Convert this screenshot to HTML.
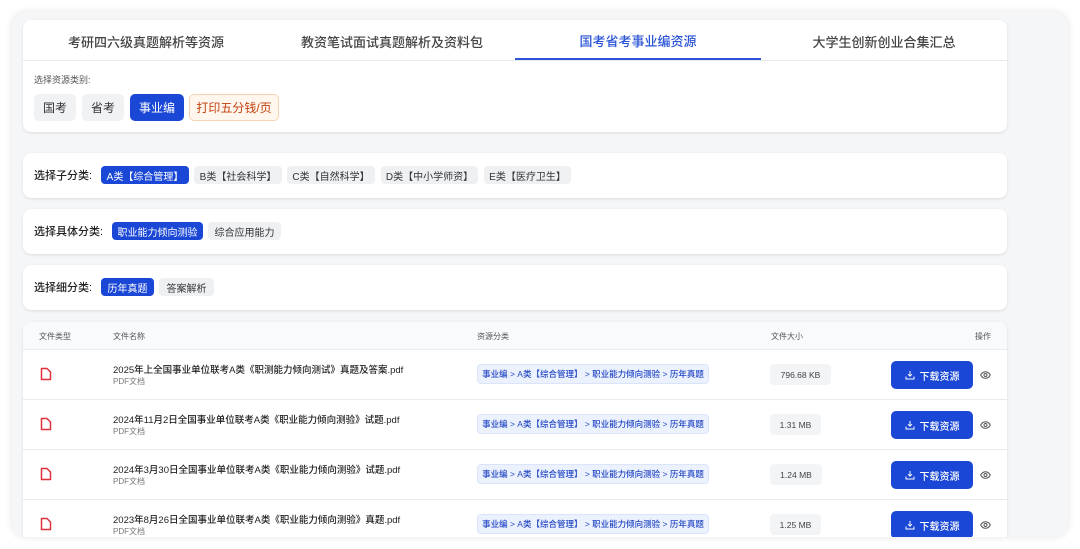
<!DOCTYPE html>
<html><head><meta charset="utf-8"><style>
*{box-sizing:border-box;margin:0;padding:0}
body{width:1080px;height:549px;overflow:hidden;background:#fff;font-family:"Liberation Sans","Noto Sans CJK SC",sans-serif;color:#333;position:relative}
.outer{position:absolute;left:12px;top:12px;width:1056px;height:525px;background:#f5f6f8;border-radius:14px;box-shadow:0 0 8px rgba(0,0,0,.1);overflow:hidden}
.card{position:absolute;left:11px;width:984px;background:#fff;border-radius:8px;box-shadow:0 1px 3px rgba(0,0,0,.1)}
.tabs{height:41px;border-bottom:1px solid #e8eaee;display:flex;position:relative}
.tab{flex:1;display:flex;align-items:center;justify-content:center;padding-top:2px;font-size:13px;color:#444;font-weight:500}
.tab.on{color:#2b54d6;border-bottom:2px solid #2b54d6}
.btn,.pill,.dl,.sz,.cat{display:flex;align-items:center;justify-content:center}
.btn{position:absolute;height:27px;border-radius:5px;font-size:12px;background:#f1f2f4;color:#333}
.pill{position:absolute;height:18px;border-radius:4px;font-size:10px;background:#eff0f2;color:#333;top:13px}
.pill.on{background:#1a47d6;color:#fff}
.lbl{position:absolute;left:11px;font-size:11px;color:#222;font-weight:500}
.th{position:absolute;top:9px;font-size:8px;color:#555}
.row{position:absolute;left:0;width:984px;height:50px;border-top:1px solid #e8eaee}
.nm{position:absolute;left:90px;top:12px;font-size:9.5px;color:#222;font-weight:500}
.sub{position:absolute;left:90px;top:26px;font-size:8px;color:#777}
.cat{position:absolute;left:454px;top:14px;width:232px;height:20px;background:#ebf1fd;border:1px solid #dbe4fa;border-radius:4px;font-size:8.5px;color:#2347c4;font-weight:500}
.sz{position:absolute;top:14px;height:21px;background:#f3f4f6;border-radius:4px;font-size:8.5px;color:#444}
.dl{position:absolute;left:868px;top:11px;width:82px;height:28px;background:#1a47d6;border-radius:5px;color:#fff;font-size:10px;font-weight:500;gap:5px}
.ic{position:absolute;left:17px;top:17px}
.eye{position:absolute;left:957px;top:21px}
</style></head><body>
<div class="outer">
 <div class="card" style="top:8px;height:112px">
  <div class="tabs"><div class="tab">考研四六级真题解析等资源</div><div class="tab">教资笔试面试真题解析及资料包</div><div class="tab on">国考省考事业编资源</div><div class="tab">大学生创新创业合集汇总</div></div>
  <div style="position:absolute;left:11px;top:53px;font-size:9px;color:#555">选择资源类别:</div>
  <div class="btn" style="left:11px;top:74px;width:42px">国考</div>
  <div class="btn" style="left:59px;top:74px;width:42px">省考</div>
  <div class="btn" style="left:107px;top:74px;width:54px;background:#1a47d6;color:#fff">事业编</div>
  <div class="btn" style="left:166px;top:74px;width:90px;background:#fff6ee;border:1px solid #f6d3b3;color:#c2410c">打印五分钱/页</div>
 </div>
 <div class="card" style="top:141px;height:45px">
  <div class="lbl" style="top:14px">选择子分类:</div>
  <div class="pill on" style="left:78px;width:88px">A类【综合管理】</div>
  <div class="pill" style="left:171px;width:88px">B类【社会科学】</div>
  <div class="pill" style="left:264px;width:88px">C类【自然科学】</div>
  <div class="pill" style="left:358px;width:97px">D类【中小学师资】</div>
  <div class="pill" style="left:461px;width:87px">E类【医疗卫生】</div>
 </div>
 <div class="card" style="top:197px;height:45px">
  <div class="lbl" style="top:14px">选择具体分类:</div>
  <div class="pill on" style="left:89px;width:91px">职业能力倾向测验</div>
  <div class="pill" style="left:185px;width:73px">综合应用能力</div>
 </div>
 <div class="card" style="top:253px;height:45px">
  <div class="lbl" style="top:14px">选择细分类:</div>
  <div class="pill on" style="left:78px;width:53px">历年真题</div>
  <div class="pill" style="left:136px;width:55px">答案解析</div>
 </div>
 <div class="card" style="top:310px;height:240px;border-radius:8px 8px 0 0;background:#fff">
  <div style="position:absolute;left:0;top:0;width:984px;height:27px;background:#f9fafb;border-radius:8px 8px 0 0"></div>
  <div class="th" style="left:16px">文件类型</div><div class="th" style="left:90px">文件名称</div><div class="th" style="left:454px">资源分类</div><div class="th" style="left:748px">文件大小</div><div class="th" style="left:952px">操作</div>
  <div class="row" style="top:27px"><svg class="ic" width="12" height="14" viewBox="0 0 12 14"><path d="M1.5 1.5h5.5l3.5 3.5v7.5h-9z" fill="none" stroke="#e0313c" stroke-width="1.5" stroke-linejoin="round"/></svg><div class="nm">2025年上全国事业单位联考A类《职测能力倾向测试》真题及答案.pdf</div><div class="sub">PDF文档</div><div class="cat">事业编 &gt; A类【综合管理】 &gt; 职业能力倾向测验 &gt; 历年真题</div><div class="sz" style="left:747px;width:61px">796.68 KB</div><div class="dl"><svg width="10" height="10" viewBox="0 0 10 10"><path d="M5 1v5M3 4.2L5 6.2 7 4.2M1 6.5V9h8V6.5" fill="none" stroke="#fff" stroke-width="1"/></svg>下载资源</div><svg class="eye" width="11" height="8" viewBox="0 0 11 8"><path d="M.7 4C2 1.5 3.6.7 5.5.7S9 1.5 10.3 4C9 6.5 7.4 7.3 5.5 7.3S2 6.5.7 4z" fill="none" stroke="#555"/><circle cx="5.5" cy="4" r="1.5" fill="none" stroke="#555"/></svg></div>
  <div class="row" style="top:77px"><svg class="ic" width="12" height="14" viewBox="0 0 12 14"><path d="M1.5 1.5h5.5l3.5 3.5v7.5h-9z" fill="none" stroke="#e0313c" stroke-width="1.5" stroke-linejoin="round"/></svg><div class="nm">2024年11月2日全国事业单位联考A类《职业能力倾向测验》试题.pdf</div><div class="sub">PDF文档</div><div class="cat">事业编 &gt; A类【综合管理】 &gt; 职业能力倾向测验 &gt; 历年真题</div><div class="sz" style="left:747px;width:51px">1.31 MB</div><div class="dl"><svg width="10" height="10" viewBox="0 0 10 10"><path d="M5 1v5M3 4.2L5 6.2 7 4.2M1 6.5V9h8V6.5" fill="none" stroke="#fff" stroke-width="1"/></svg>下载资源</div><svg class="eye" width="11" height="8" viewBox="0 0 11 8"><path d="M.7 4C2 1.5 3.6.7 5.5.7S9 1.5 10.3 4C9 6.5 7.4 7.3 5.5 7.3S2 6.5.7 4z" fill="none" stroke="#555"/><circle cx="5.5" cy="4" r="1.5" fill="none" stroke="#555"/></svg></div>
  <div class="row" style="top:127px"><svg class="ic" width="12" height="14" viewBox="0 0 12 14"><path d="M1.5 1.5h5.5l3.5 3.5v7.5h-9z" fill="none" stroke="#e0313c" stroke-width="1.5" stroke-linejoin="round"/></svg><div class="nm">2024年3月30日全国事业单位联考A类《职业能力倾向测验》试题.pdf</div><div class="sub">PDF文档</div><div class="cat">事业编 &gt; A类【综合管理】 &gt; 职业能力倾向测验 &gt; 历年真题</div><div class="sz" style="left:747px;width:52px">1.24 MB</div><div class="dl"><svg width="10" height="10" viewBox="0 0 10 10"><path d="M5 1v5M3 4.2L5 6.2 7 4.2M1 6.5V9h8V6.5" fill="none" stroke="#fff" stroke-width="1"/></svg>下载资源</div><svg class="eye" width="11" height="8" viewBox="0 0 11 8"><path d="M.7 4C2 1.5 3.6.7 5.5.7S9 1.5 10.3 4C9 6.5 7.4 7.3 5.5 7.3S2 6.5.7 4z" fill="none" stroke="#555"/><circle cx="5.5" cy="4" r="1.5" fill="none" stroke="#555"/></svg></div>
  <div class="row" style="top:177px"><svg class="ic" width="12" height="14" viewBox="0 0 12 14"><path d="M1.5 1.5h5.5l3.5 3.5v7.5h-9z" fill="none" stroke="#e0313c" stroke-width="1.5" stroke-linejoin="round"/></svg><div class="nm">2023年8月26日全国事业单位联考A类《职业能力倾向测验》真题.pdf</div><div class="sub">PDF文档</div><div class="cat">事业编 &gt; A类【综合管理】 &gt; 职业能力倾向测验 &gt; 历年真题</div><div class="sz" style="left:747px;width:51px">1.25 MB</div><div class="dl"><svg width="10" height="10" viewBox="0 0 10 10"><path d="M5 1v5M3 4.2L5 6.2 7 4.2M1 6.5V9h8V6.5" fill="none" stroke="#fff" stroke-width="1"/></svg>下载资源</div><svg class="eye" width="11" height="8" viewBox="0 0 11 8"><path d="M.7 4C2 1.5 3.6.7 5.5.7S9 1.5 10.3 4C9 6.5 7.4 7.3 5.5 7.3S2 6.5.7 4z" fill="none" stroke="#555"/><circle cx="5.5" cy="4" r="1.5" fill="none" stroke="#555"/></svg></div>
 </div>
</div>
</body></html>
